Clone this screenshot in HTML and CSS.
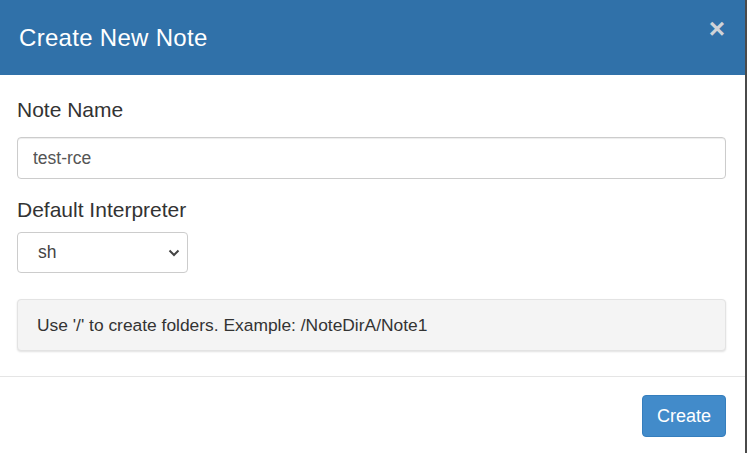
FILE: index.html
```html
<!DOCTYPE html>
<html>
<head>
<meta charset="utf-8">
<link rel="stylesheet" href="styles.css">
</head>
<body>
<div class="modal">
  <div class="modal-header">
    <h4 class="modal-title">Create New Note</h4>
    <button class="close" type="button">&times;</button>
  </div>
  <div class="modal-body">
    <div class="form-group">
      <label class="label">Note Name</label>
      <input class="form-control" type="text" value="test-rce">
    </div>
    <div class="form-group">
      <label class="label label-2">Default Interpreter</label>
      <div class="select">
        <span>sh</span>
        <svg class="chev" width="12" height="8" viewBox="0 0 12 8"><path d="M1.5 1.5 L6 6 L10.5 1.5" fill="none" stroke="#444" stroke-width="2"/></svg>
      </div>
    </div>
    <div class="well">Use '/' to create folders. Example: /NoteDirA/Note1</div>
  </div>
  <div class="modal-footer">
    <button class="btn" type="button">Create</button>
  </div>
</div>
</body>
</html>
```

FILE: styles.css
```css
* { box-sizing: border-box; }
html, body { margin: 0; padding: 0; height: 100%; }
body {
  font-family: "Liberation Sans", Arial, sans-serif;
  background: #fff;
  color: #333;
}
.modal {
  width: 747px;
  height: 453px;
  border-right: 2px solid #4a4a4a;
  background: #fff;
}
.modal-header {
  height: 75px;
  background: #3071a9;
  display: flex;
  align-items: flex-start;
  justify-content: space-between;
  padding: 0 20px 0 19px;
}
.modal-title {
  margin: 0;
  padding-top: 24px;
  font-size: 24px;
  font-weight: normal;
  color: #fff;
  line-height: 28px;
  letter-spacing: 0.3px;
}
.close {
  border: 0;
  background: none;
  padding: 0;
  margin-top: 17px;
  font-family: "Liberation Sans", Arial, sans-serif;
  font-size: 28px;
  font-weight: bold;
  line-height: 24px;
  color: #cfd3d8;
}
.modal-body {
  padding: 22px 19px 25px 17px;
  border-bottom: 1px solid #e5e5e5;
}
.form-group { margin-bottom: 18px; }
.label {
  display: block;
  font-size: 21px;
  line-height: 25px;
  margin-bottom: 15px;
  color: #333;
}
.label-2 { margin-bottom: 10px; }
.form-control {
  display: block;
  width: 100%;
  height: 42px;
  padding: 0 15px;
  font-family: "Liberation Sans", Arial, sans-serif;
  font-size: 17.5px;
  color: #555;
  border: 1px solid #ccc;
  border-radius: 4px;
  box-shadow: inset 0 1px 1px rgba(0,0,0,.075);
  outline: none;
}
.select {
  width: 171px;
  height: 41px;
  border: 1px solid #ccc;
  border-radius: 4px;
  display: flex;
  align-items: center;
  justify-content: space-between;
  padding: 0 7px 0 20px;
  font-size: 17.5px;
  color: #444;
}
.chev { display: block; }
.well {
  margin-top: 26px;
  height: 52px;
  background: #f4f4f4;
  border: 1px solid #e3e3e3;
  border-radius: 4px;
  box-shadow: 0 1px 2px rgba(0,0,0,.12);
  display: flex;
  align-items: center;
  padding: 0 19px;
  font-size: 17.4px;
  color: #333;
}
.modal-footer {
  display: flex;
  justify-content: flex-end;
  padding: 18px 19px 0 0;
}
.btn {
  width: 84px;
  height: 42px;
  border: 1px solid #357ebd;
  border-radius: 4px;
  background: #428bca;
  color: #fff;
  font-family: "Liberation Sans", Arial, sans-serif;
  font-size: 18px;
  padding: 0;
}
```
